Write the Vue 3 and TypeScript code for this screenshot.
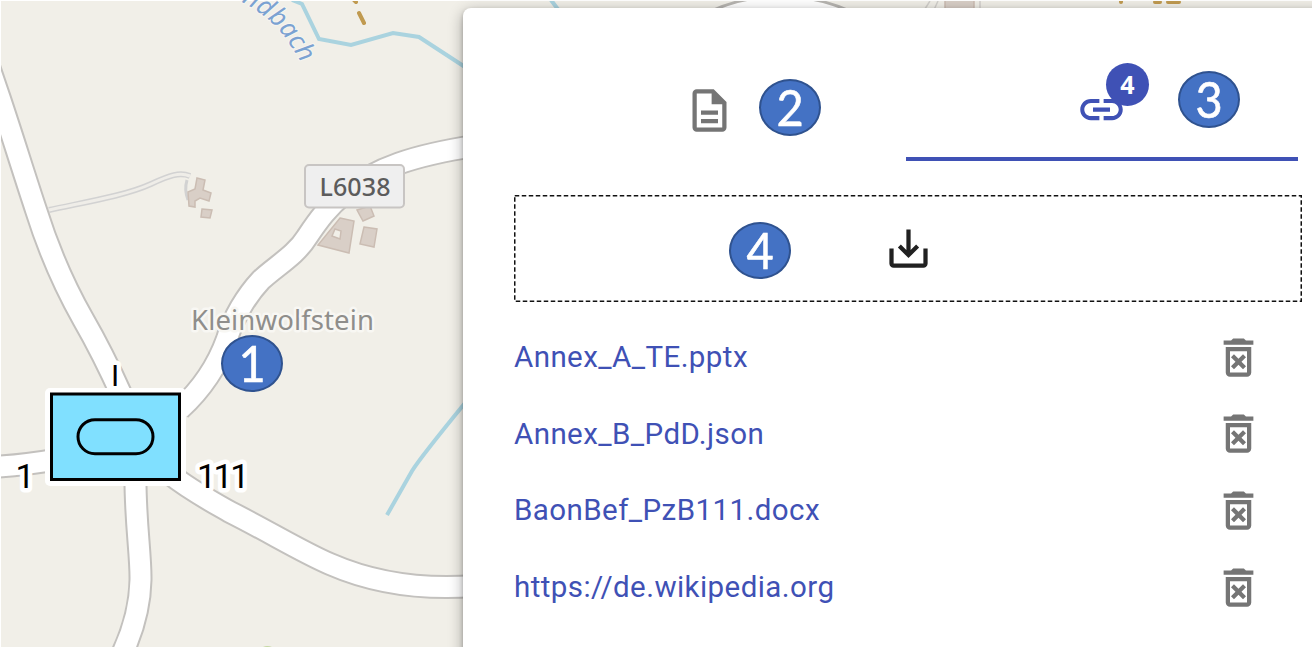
<script setup lang="ts">
interface Attachment { id: number; name: string }

const attachments: Attachment[] = [
  { id: 1, name: 'Annex_A_TE.pptx' },
  { id: 2, name: 'Annex_B_PdD.json' },
  { id: 3, name: 'BaonBef_PzB111.docx' },
  { id: 4, name: 'https://de.wikipedia.org' },
]

const callouts: number[] = [1, 2, 3, 4]

const roads: string[] = [
  'M-14 58 L0 99 C14 141 24 174 36 210 C48 248 62 282 83 319 C98 345 108 365 122 396',
  'M180 409 C203 388 218 364 227 339 C233 318 246 296 261 280 C276 266 296 255 307 237 C319 219 328 207 345 193 C375 168 415 155 475 146',
  'M-6 467 Q25 465 60 459',
  'M135.500 475 C135 520 141 555 140.500 580 C140 605 134 628 123 652',
  'M170 474 C190 490 209 500 230 512 C270 532 300 551 330 564 C362 578 410 591 475 586',
]
</script>

<template>
  <main class="screen">
    <svg class="map" viewBox="0 0 1312 647" width="1312" height="647">
      <rect x="1" y="1" width="1311" height="646" fill="#f1efe8" />
      <g fill="none" stroke="#aad3df" stroke-width="4">
        <path d="M292 0 L302 4 L319 39 L351 45 L393 33 L419 37 L465 67" />
        <path d="M387 515 L412 471 Q420 458 465 403" />
        <path d="M551 0 L560 12" />
      </g>
      <g fill="none" stroke="#c09a50" stroke-width="4" stroke-linecap="round">
        <path d="M354 0 L356 2 M359 13 L364 23 M1121 1v1 M1155 2h5 M1168 2h11" />
      </g>
      <g fill="none">
        <path d="M49 210 C80 203 125 196 151 184 C170 175 180 172 190 176" stroke="#d2d2d2" stroke-width="6" />
        <path d="M49 210 C80 203 125 196 151 184 C170 175 180 172 190 176" stroke="#efede8" stroke-width="3" />
        <path d="M187 180 Q184 190 188 200" stroke="#d2d2d2" stroke-width="3" />
      </g>
      <g fill="#d9cfc7" stroke="#cbbdb3" stroke-width="1.500">
        <path d="M197 178 L205 180 L203 190 L211 193 L209 201 L200 198 L195 201 L195 207 L189 206 L188 192 L195 189 Z" />
        <path d="M202 209 L212 210 L210 218 L201 217 Z" />
        <path d="M340 218 L354 221 L349 253 L318 245 Z M335 229 L341 231 L340 239 L332 236 Z" fill-rule="evenodd" />
        <path d="M357 210 L370 206 L374 216 L363 221 Z" />
        <path d="M364 227 L377 229 L374 247 L360 244 Z" />
        <path d="M945 0 H974 V12 H945 Z" />
      </g>
      <path d="M923 12 L930 1 M933 12 L938 1 M980 1v11" fill="none" stroke="#d2d0cc" stroke-width="1.500" />
      <path d="M704 14 Q780 -22 857 14 Z" fill="#fff" stroke="#b7b5b1" stroke-width="3" />
      <g fill="none" stroke="#c3c1be" stroke-width="24"><path v-for="d in roads" :key="d" :d="d" /></g>
      <g fill="none" stroke="#fff" stroke-width="20"><path v-for="d in roads" :key="d" :d="d" /></g>
      <path d="M263 647 Q267 645 272 647" fill="#c6d8a4" />
      <path d="M0 0.500 H1312 M0.500 0 V647" stroke="#fff" stroke-width="1" />

      <path id="stream-line" d="M241 2 Q266 14 283 35 Q294 50 307 72" fill="none" />
      <text class="stream"><textPath href="#stream-line" textLength="88">ndbach</textPath></text>

      <rect x="305" y="165" width="99" height="42.500" rx="4" fill="#efefef" stroke="#c8c5c3" stroke-width="2" />
      <text class="plate" x="319.500" y="196" textLength="71">L6038</text>
      <text class="place" x="191" y="330" textLength="183">Kleinwolfstein</text>

      <rect x="45" y="388" width="141" height="98" rx="5" fill="#fff" />
      <rect x="51.500" y="394" width="128" height="85.500" fill="#80e0ff" stroke="#000" stroke-width="3" />
      <rect x="78" y="419.700" width="75" height="34" rx="17" fill="none" stroke="#000" stroke-width="3" />
      <g class="unit">
        <text class="echelon" x="111" y="386">I</text>
        <text x="15.500" y="488">1</text>
        <text x="197" y="488">111</text>
      </g>
    </svg>

    <section class="panel">
      <nav class="tabs">
        <button class="tab">
          <svg class="icon" viewBox="0 0 24 24"><path d="M8 16h8v2H8zm0-4h8v2H8zm6-10H6c-1.100 0-2 .9-2 2v16c0 1.100.89 2 1.990 2H18c1.100 0 2-.9 2-2V8l-6-6zm4 18H6V4h7v5h5v11z" /></svg>
        </button>
        <button class="tab active">
          <svg class="icon" viewBox="0 0 24 24"><path d="M3.900 12c0-1.710 1.390-3.100 3.100-3.100h4V7H7c-2.760 0-5 2.240-5 5s2.240 5 5 5h4v-1.900H7c-1.710 0-3.100-1.390-3.100-3.100zM8 13h8v-2H8v2zm9-6h-4v1.900h4c1.710 0 3.100 1.390 3.100 3.100s-1.390 3.100-3.100 3.100h-4V17h4c2.760 0 5-2.240 5-5s-2.240-5-5-5z" /></svg>
          <span class="badge">{{ attachments.length }}</span>
        </button>
      </nav>
      <div class="dropzone">
        <svg class="outline" width="788" height="107"><rect x=".75" y=".75" width="786.500" height="105.500" fill="none" stroke="#111" stroke-width="1.500" stroke-dasharray="4.500 2.500" /></svg>
        <svg class="icon" viewBox="0 0 24 24"><path d="M19 12v7H5v-7H3v7c0 1.100.9 2 2 2h14c1.100 0 2-.9 2-2v-7h-2zm-6 .67l2.590-2.580L17 11.500l-5 5-5-5 1.410-1.410L11 12.670V3h2v9.670z" /></svg>
      </div>
      <ul class="files">
        <li v-for="file in attachments" :key="file.id">
          <a>{{ file.name }}</a>
          <svg class="icon" viewBox="0 0 24 24"><path d="M14.120 10.470L12 12.590l-2.130-2.120-1.410 1.410L10.590 14l-2.120 2.120 1.410 1.410L12 15.410l2.120 2.120 1.410-1.410L13.410 14l2.120-2.120zM15.500 4l-1-1h-5l-1 1H5v2h14V4zM6 19c0 1.100.9 2 2 2h8c1.100 0 2-.9 2-2V7H6v12zM8 9h8v10H8V9z" /></svg>
        </li>
      </ul>
    </section>

    <span v-for="n in callouts" :key="n" class="callout" :class="`c${n}`"><span class="digit">{{ n }}</span></span>
  </main>
</template>

<style>
body { margin: 0; background: #fff; }
</style>

<style scoped>
.screen { position: relative; width: 1312px; height: 647px; overflow: hidden; font-family: Roboto, sans-serif; }
.map { display: block; }
.stream { font: italic 26px "Noto Sans", sans-serif; fill: #7ba2d2; stroke: #f7f5f0; stroke-width: 2px; paint-order: stroke; }
.plate { font: 500 25px "Noto Sans", sans-serif; fill: #5c5c5c; }
.place { font: 27.500px "Noto Sans", sans-serif; fill: #8f8e8b; stroke: #f8f7f3; stroke-width: 5px; stroke-linejoin: round; paint-order: stroke; }
.unit { font: 34px Roboto, sans-serif; letter-spacing: -2.500px; fill: #000; stroke: #fff; stroke-width: 9px; stroke-linejoin: round; paint-order: stroke; }
.echelon { font-size: 30px; }
.panel {
  position: absolute; left: 463px; top: 8px; width: 870px; height: 660px;
  box-sizing: border-box; padding: 0 0 0 51px;
  border-radius: 8px; background: #fff; box-shadow: 0 4px 15px rgba(0, 0, 0, .32), 0 2px 4px rgba(0, 0, 0, .22);
}
.icon { display: block; width: 51px; height: 51px; fill: #757575; flex: none; }
.tabs { display: flex; width: 784px; height: 153px; }
.tab { position: relative; flex: 1; display: flex; align-items: center; justify-content: center; padding: 51px 1px 0 0; height: 153px; box-sizing: border-box; border: 0; background: none; }
.tab.active { border-bottom: 4px solid #3f51b5; padding-top: 54px; }
.active .icon { fill: #3f51b5; }
.badge {
  position: absolute; left: 200px; top: 55px; width: 43px; height: 43px; border-radius: 50%;
  background: #3f51b5; color: #fff; font: 700 25px/42px "Open Sans", sans-serif; text-align: center;
}
.dropzone { position: relative; display: flex; align-items: center; justify-content: center; width: 788px; height: 107px; margin-top: 34px; }
.dropzone .icon { fill: #212121; }
.outline { position: absolute; left: 0; top: 0; }
.files { list-style: none; margin: 17px 0 0; padding: 0; width: 750px; }
.files li { display: flex; align-items: center; justify-content: space-between; height: 76.600px; }
.files a { color: #3f51b5; font-size: 29.500px; line-height: 40px; letter-spacing: .43px; }
.callout {
  position: absolute; width: 62px; height: 57px; box-sizing: border-box; border: 2.500px solid #2f528f; border-radius: 50%;
  background: #4472c4; color: #fff; font: 51px/52px Lato, sans-serif; text-align: center;
}
.digit { display: block; transform: scaleX(.92); -webkit-text-stroke: .6px #fff; }
.c1 { left: 221px; top: 335px; }
.c2 { left: 759px; top: 79px; }
.c3 { left: 1178px; top: 71px; }
.c4 { left: 729px; top: 222px; }
</style>
